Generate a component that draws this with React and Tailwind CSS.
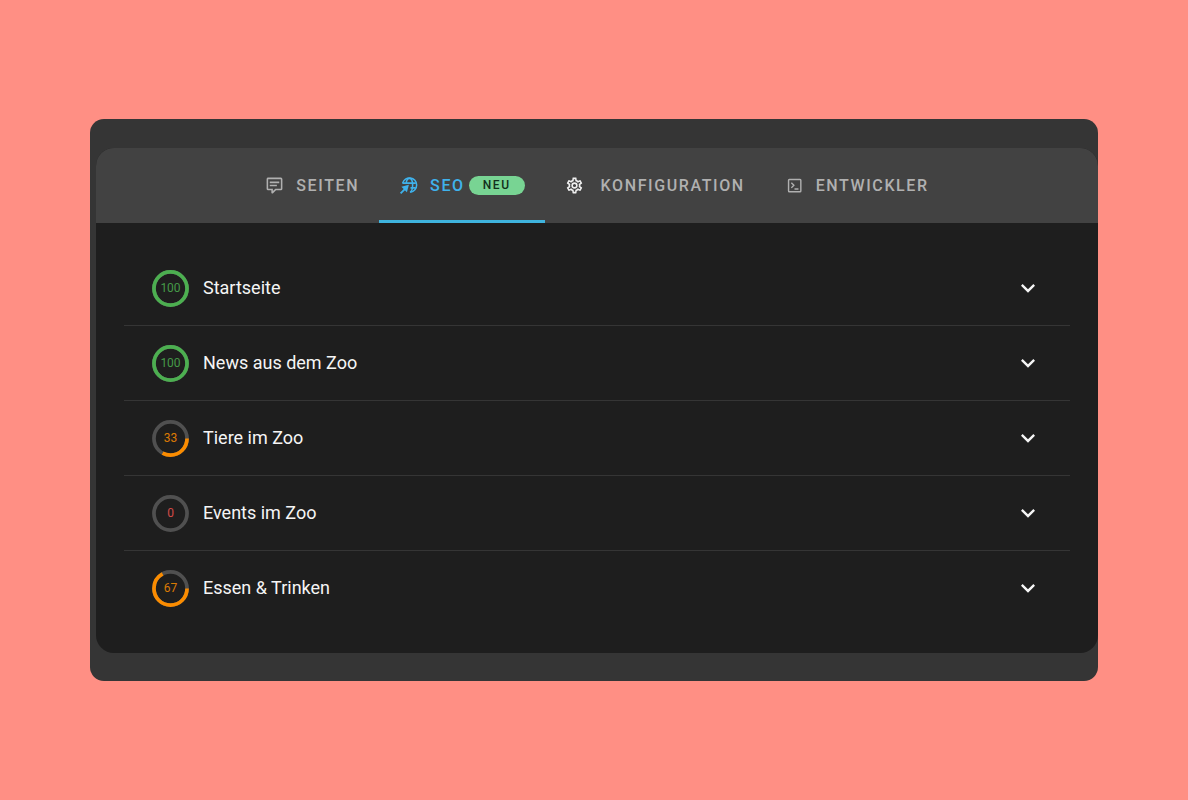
import React, { useState } from 'react';

const pages = [
  { title: 'Startseite', score: 100 },
  { title: 'News aus dem Zoo', score: 100 },
  { title: 'Tiere im Zoo', score: 33 },
  { title: 'Events im Zoo', score: 0 },
  { title: 'Essen & Trinken', score: 67 },
];

function CommentIcon() {
  return (
    <svg className="w-[19px] h-[19px]" viewBox="0 0 24 24" fill="currentColor" aria-hidden="true">
      <path d="M9,22A1,1 0 0,1 8,21V18H4A2,2 0 0,1 2,16V4C2,2.89 2.9,2 4,2H20A2,2 0 0,1 22,4V16A2,2 0 0,1 20,18H13.9L10.2,21.71C10,21.9 9.75,22 9.5,22V22H9M10,16V19.08L13.08,16H20V4H4V16H10M6,7H18V9H6V7M6,11H15V13H6V11Z" />
    </svg>
  );
}

function SeoIcon() {
  return (
    <svg className="w-[19px] h-[19px]" viewBox="0 0 24 24" fill="none" stroke="currentColor" strokeWidth={1.9} aria-hidden="true">
      <path d="M4.6 9.2A9 9 0 1 1 14.5 20.4" />
      <path d="M4.4 9H21.2M14.5 15H21M9 9c.6-3.6 2-6 4-6 2.7 0 4.2 3.8 4.2 8.5s-1.5 8.5-3.4 8.9" />
      <path d="M2 22l6-6" strokeWidth={2.4} />
      <path d="M3 13.5l9.5-2.5-2.5 9.5z" fill="currentColor" stroke="none" />
    </svg>
  );
}

function CogIcon() {
  return (
    <svg className="w-[19px] h-[19px]" viewBox="0 0 24 24" fill="currentColor" aria-hidden="true">
      <path d="M12,8A4,4 0 0,1 16,12A4,4 0 0,1 12,16A4,4 0 0,1 8,12A4,4 0 0,1 12,8M12,10A2,2 0 0,0 10,12A2,2 0 0,0 12,14A2,2 0 0,0 14,12A2,2 0 0,0 12,10M10,22C9.75,22 9.54,21.82 9.5,21.58L9.13,18.93C8.5,18.68 7.96,18.34 7.44,17.94L4.95,18.95C4.73,19.03 4.46,18.95 4.34,18.73L2.34,15.27C2.21,15.05 2.27,14.78 2.46,14.63L4.57,12.97L4.5,12L4.57,11L2.46,9.37C2.27,9.22 2.21,8.95 2.34,8.73L4.34,5.27C4.46,5.05 4.73,4.96 4.95,5.05L7.44,6.05C7.96,5.66 8.5,5.32 9.13,5.07L9.5,2.42C9.54,2.18 9.75,2 10,2H14C14.25,2 14.46,2.18 14.5,2.42L14.87,5.07C15.5,5.32 16.04,5.66 16.56,6.05L19.05,5.05C19.27,4.96 19.54,5.05 19.66,5.27L21.66,8.73C21.79,8.95 21.73,9.22 21.54,9.37L19.43,11L19.5,12L19.43,13L21.54,14.63C21.73,14.78 21.79,15.05 21.66,15.27L19.66,18.73C19.54,18.95 19.27,19.04 19.05,18.95L16.56,17.95C16.04,18.34 15.5,18.68 14.87,18.93L14.5,21.58C14.46,21.82 14.25,22 14,22H10M11.25,4L10.88,6.61C9.68,6.86 8.62,7.5 7.85,8.39L5.44,7.35L4.69,8.65L6.8,10.2C6.4,11.37 6.4,12.64 6.8,13.8L4.68,15.36L5.43,16.66L7.86,15.62C8.63,16.5 9.68,17.14 10.87,17.38L11.24,20H12.76L13.13,17.39C14.32,17.14 15.37,16.5 16.14,15.62L18.57,16.66L19.32,15.36L17.2,13.81C17.6,12.64 17.6,11.37 17.2,10.2L19.31,8.65L18.56,7.35L16.15,8.39C15.38,7.5 14.32,6.86 13.12,6.62L12.75,4H11.25Z" />
    </svg>
  );
}

function TerminalIcon() {
  return (
    <svg className="w-[19px] h-[19px]" viewBox="0 0 24 24" fill="none" stroke="currentColor" strokeWidth={1.8} aria-hidden="true">
      <rect x="4.5" y="4.5" width="15.5" height="15.5" rx="1" />
      <path d="M8 8.5l3.2 3.2L8 15M12 16.5h5" />
    </svg>
  );
}

const tabs = [
  { id: 'seiten', label: 'SEITEN', icon: CommentIcon, iconClass: 'mr-3' },
  { id: 'seo', label: 'SEO', icon: SeoIcon, iconClass: 'mr-3', badge: 'NEU' },
  { id: 'konfiguration', label: 'KONFIGURATION', icon: CogIcon, iconClass: 'mr-[17px] text-[#f0f0f0]' },
  { id: 'entwickler', label: 'ENTWICKLER', icon: TerminalIcon, iconClass: 'mr-3' },
];

// Red = nothing done, orange = partly done, green = complete
const getScoreColor = (score) => {
  if (score === 0) return 'text-[#ef5350]';
  if (score < 100) return 'text-[#fb8c00]';
  return 'text-[#4caf50]';
};

function ScoreRing({ score }) {
  return (
    <span className={`grid place-items-center w-[37px] h-[37px] ${getScoreColor(score)}`}>
      <svg className="col-start-1 row-start-1 w-full h-full" viewBox="0 0 38 38" fill="none" strokeWidth={3.8} aria-hidden="true">
        <circle cx="19" cy="19" r="17" stroke="#505050" />
        {score > 0 && (
          <circle cx="19" cy="19" r="17" stroke="currentColor" pathLength={100} strokeDasharray={`${score} 100`} />
        )}
      </svg>
      <span className="col-start-1 row-start-1 text-xs leading-4 opacity-85">{score}</span>
    </span>
  );
}

function App() {
  const [activeTab, setActiveTab] = useState('seo');

  return (
    <div className="min-h-screen bg-[#ff8f84] flex flex-col justify-center px-[90px] py-10 font-[Roboto,sans-serif]">
      <div className="bg-[#353535] rounded-[14px] overflow-hidden pt-[29px] pb-7 pl-[6px]">
        <main className="bg-[#1e1e1e] rounded-[18px] overflow-hidden">
          {/* Tabs */}
          <nav className="bg-[#424242] flex justify-center h-[75px]" role="tablist">
            {tabs.map(({ id, label, icon: Icon, iconClass, badge }) => (
              <button
                key={id}
                type="button"
                role="tab"
                aria-selected={activeTab === id}
                onClick={() => setActiveTab(id)}
                className={`flex items-center px-5 border-y-3 border-t-transparent text-base font-medium tracking-widest ${
                  activeTab === id ? 'text-[#3fb2ec] border-b-[#3fb4de]' : 'text-[#b0b0b0] border-b-transparent'
                }`}
              >
                <span className={iconClass}>
                  <Icon />
                </span>
                {label}
                {badge && (
                  <span className="ml-1 px-[14px] rounded-full bg-[#78d493] text-[#12301c] text-xs leading-[19px]">
                    {badge}
                  </span>
                )}
              </button>
            ))}
          </nav>

          {/* Page list */}
          <ul className="px-7 py-7 divide-y divide-[#353535]">
            {pages.map((page) => (
              <li key={page.title}>
                <button type="button" className="w-full h-[74px] flex items-center px-7 text-left text-[#f5f5f5]">
                  <ScoreRing score={page.score} />
                  <span className="ml-[14px] text-lg">{page.title}</span>
                  <svg className="ml-auto w-7 h-7" viewBox="0 0 24 24" fill="currentColor" aria-hidden="true">
                    <path d="M7.41 8.58L12 13.17l4.59-4.59L18 10l-6 6-6-6z" />
                  </svg>
                </button>
              </li>
            ))}
          </ul>
        </main>
      </div>
    </div>
  );
}

export default App;
